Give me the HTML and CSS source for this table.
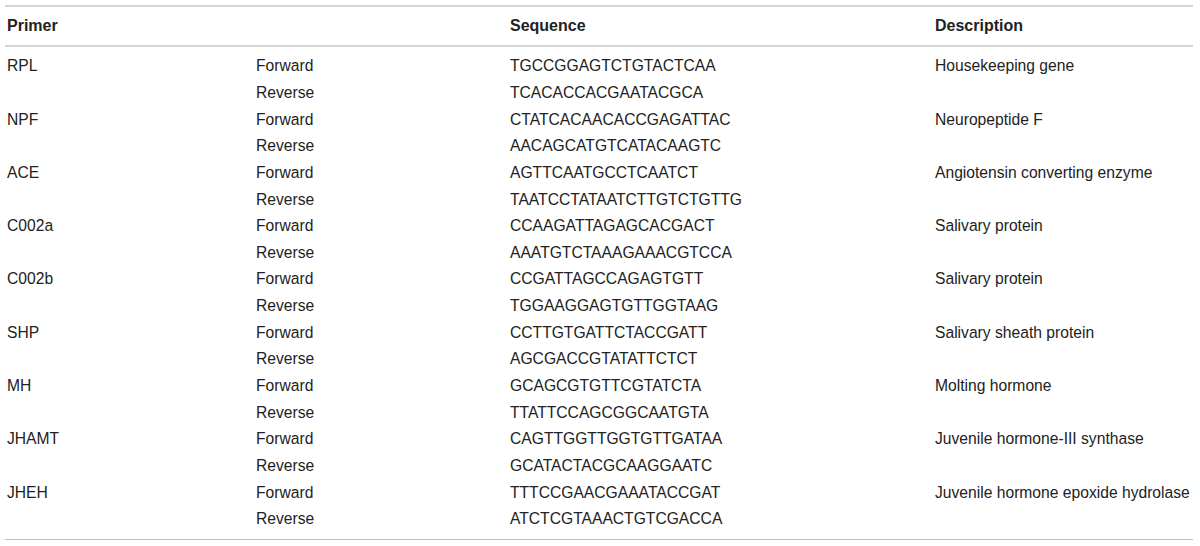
FILE: index.html
```html
<!DOCTYPE html>
<html>
<head>
<meta charset="utf-8">
<link rel="stylesheet" href="styles.css">
</head>
<body>
<table class="primers">
  <colgroup>
    <col class="c1"><col class="c2"><col class="c3"><col class="c4">
  </colgroup>
  <thead>
    <tr><th>Primer</th><th></th><th>Sequence</th><th>Description</th></tr>
  </thead>
  <tbody>
    <tr class="first"><td>RPL</td><td>Forward</td><td>TGCCGGAGTCTGTACTCAA</td><td>Housekeeping gene</td></tr>
    <tr><td></td><td>Reverse</td><td>TCACACCACGAATACGCA</td><td></td></tr>
    <tr><td>NPF</td><td>Forward</td><td>CTATCACAACACCGAGATTAC</td><td>Neuropeptide F</td></tr>
    <tr><td></td><td>Reverse</td><td>AACAGCATGTCATACAAGTC</td><td></td></tr>
    <tr><td>ACE</td><td>Forward</td><td>AGTTCAATGCCTCAATCT</td><td>Angiotensin converting enzyme</td></tr>
    <tr><td></td><td>Reverse</td><td>TAATCCTATAATCTTGTCTGTTG</td><td></td></tr>
    <tr><td>C002a</td><td>Forward</td><td>CCAAGATTAGAGCACGACT</td><td>Salivary protein</td></tr>
    <tr><td></td><td>Reverse</td><td>AAATGTCTAAAGAAACGTCCA</td><td></td></tr>
    <tr><td>C002b</td><td>Forward</td><td>CCGATTAGCCAGAGTGTT</td><td>Salivary protein</td></tr>
    <tr><td></td><td>Reverse</td><td>TGGAAGGAGTGTTGGTAAG</td><td></td></tr>
    <tr><td>SHP</td><td>Forward</td><td>CCTTGTGATTCTACCGATT</td><td>Salivary sheath protein</td></tr>
    <tr><td></td><td>Reverse</td><td>AGCGACCGTATATTCTCT</td><td></td></tr>
    <tr><td>MH</td><td>Forward</td><td>GCAGCGTGTTCGTATCTA</td><td>Molting hormone</td></tr>
    <tr><td></td><td>Reverse</td><td>TTATTCCAGCGGCAATGTA</td><td></td></tr>
    <tr><td>JHAMT</td><td>Forward</td><td>CAGTTGGTTGGTGTTGATAA</td><td>Juvenile hormone-III synthase</td></tr>
    <tr><td></td><td>Reverse</td><td>GCATACTACGCAAGGAATC</td><td></td></tr>
    <tr><td>JHEH</td><td>Forward</td><td>TTTCCGAACGAAATACCGAT</td><td>Juvenile hormone epoxide hydrolase</td></tr>
    <tr class="last"><td></td><td>Reverse</td><td>ATCTCGTAAACTGTCGACCA</td><td></td></tr>
  </tbody>
</table>
</body>
</html>
```

FILE: styles.css
```css
html, body {
  margin: 0;
  padding: 0;
  background: #ffffff;
}

body {
  padding: 5px 0 0 5px;
}

.primers {
  width: 1188px;
  border-collapse: collapse;
  table-layout: fixed;
  font-family: "Liberation Sans", Arial, Helvetica, sans-serif;
  color: #222222;
}

.c1 { width: 249px; }
.c2 { width: 254px; }
.c3 { width: 425px; }
.c4 { width: 260px; }

.primers thead tr {
  border-top: 2px solid #d4d4d4;
  border-bottom: 2px solid #d4d4d4;
}

.primers th {
  height: 38px;
  padding: 0 0 0 2px;
  text-align: left;
  font-size: 16px;
  font-weight: bold;
  vertical-align: middle;
}

.primers td {
  height: 26.65px;
  padding: 0 0 0 2px;
  font-size: 15.65px;
  line-height: 18px;
  vertical-align: middle;
  white-space: nowrap;
}

.primers tr.first td {
  padding-top: 6px;
}

.primers tr.last td {
  padding-bottom: 6px;
}

.primers tbody tr.last {
  border-bottom: 1px solid #bdbdbd;
}
```
